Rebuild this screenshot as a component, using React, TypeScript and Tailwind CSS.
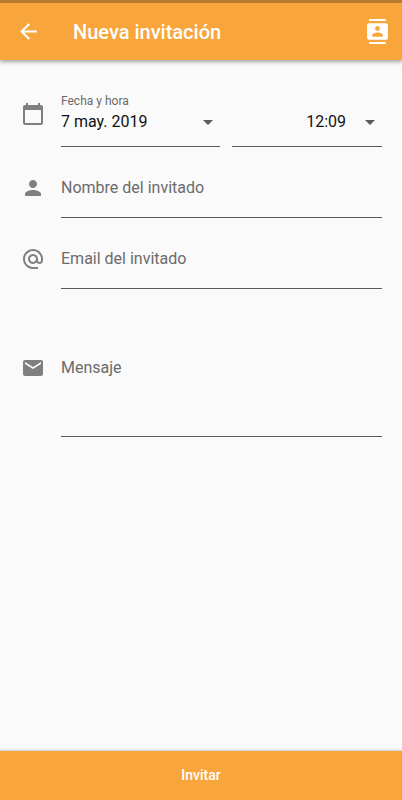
import type { ReactNode } from "react";
import {
  MdAlternateEmail,
  MdArrowBack,
  MdArrowDropDown,
  MdCalendarToday,
  MdContacts,
  MdEmail,
  MdPerson,
} from "react-icons/md";

function Row({ icon, children }: { icon: ReactNode; children: ReactNode }) {
  return (
    <div className="flex items-center gap-4">
      <span className="shrink-0 text-[#7f7f7f]">{icon}</span>
      <div className="min-w-0 flex-1">{children}</div>
    </div>
  );
}

function Picker({ id, value, alignRight }: { id: string; value: string; alignRight?: boolean }) {
  return (
    <div className="grid items-start border-b border-[#5a5a5a]">
      <select
        id={id}
        aria-label={alignRight ? "Hora" : undefined}
        className={
          "col-start-1 row-start-1 h-6 w-full appearance-none bg-transparent text-[16px] text-[#111111] outline-none " +
          (alignRight ? "pr-9 [text-align-last:right]" : "pr-9")
        }
      >
        <option>{value}</option>
      </select>
      <MdArrowDropDown
        size={24}
        className="pointer-events-none col-start-1 row-start-1 mb-3 justify-self-end text-[#5a5a5a]"
      />
    </div>
  );
}

const fieldClass =
  "block w-full border-b border-[#5a5a5a] bg-transparent text-[16px] text-[#111111] outline-none placeholder:text-[#6b6b6b] placeholder:opacity-100";

export default function App() {
  return (
    <div className="flex min-h-screen flex-col bg-[#fafafa] font-[Roboto,sans-serif]">
      <header className="flex h-[60px] items-center border-t-3 border-[#b87b2e] bg-[#f8a53c] pr-3 pl-4 text-white shadow-[0_2px_4px_rgba(0,0,0,0.35)]">
        <button type="button" aria-label="Atrás">
          <MdArrowBack size={25} />
        </button>
        <h1 className="ml-8 flex-1 text-[20px] leading-6 font-medium">Nueva invitación</h1>
        <button type="button" aria-label="Contactos">
          <MdContacts size={25} />
        </button>
      </header>

      <form id="invitacion" className="flex flex-1 flex-col gap-[10px] pt-8 pr-5 pb-8 pl-[21px]">
        <Row icon={<MdCalendarToday size={24} className="-mt-3" />}>
          <label htmlFor="fecha" className="block text-[12px] leading-[18px] text-[#6b6b6b]">
            Fecha y hora
          </label>
          <div className="grid grid-cols-[158fr_150fr] gap-3">
            <Picker id="fecha" value="7 may. 2019" />
            <Picker id="hora" value="12:09" alignRight />
          </div>
        </Row>
        <Row icon={<MdPerson size={24} />}>
          <input type="text" aria-label="Nombre del invitado" placeholder="Nombre del invitado" className={fieldClass + " h-[61px]"} />
        </Row>
        <Row icon={<MdAlternateEmail size={24} />}>
          <input type="email" aria-label="Email del invitado" placeholder="Email del invitado" className={fieldClass + " h-[61px]"} />
        </Row>
        <Row icon={<MdEmail size={24} />}>
          <textarea aria-label="Mensaje" placeholder="Mensaje" className={fieldClass + " h-[138px] resize-none pt-[57px] leading-6"} />
        </Row>
      </form>

      <button
        type="submit"
        form="invitacion"
        className="h-[49px] w-full bg-[#f8a53c] text-[14px] font-medium text-white shadow-[0_-1px_2px_rgba(0,0,0,0.2)]"
      >
        Invitar
      </button>
    </div>
  );
}
